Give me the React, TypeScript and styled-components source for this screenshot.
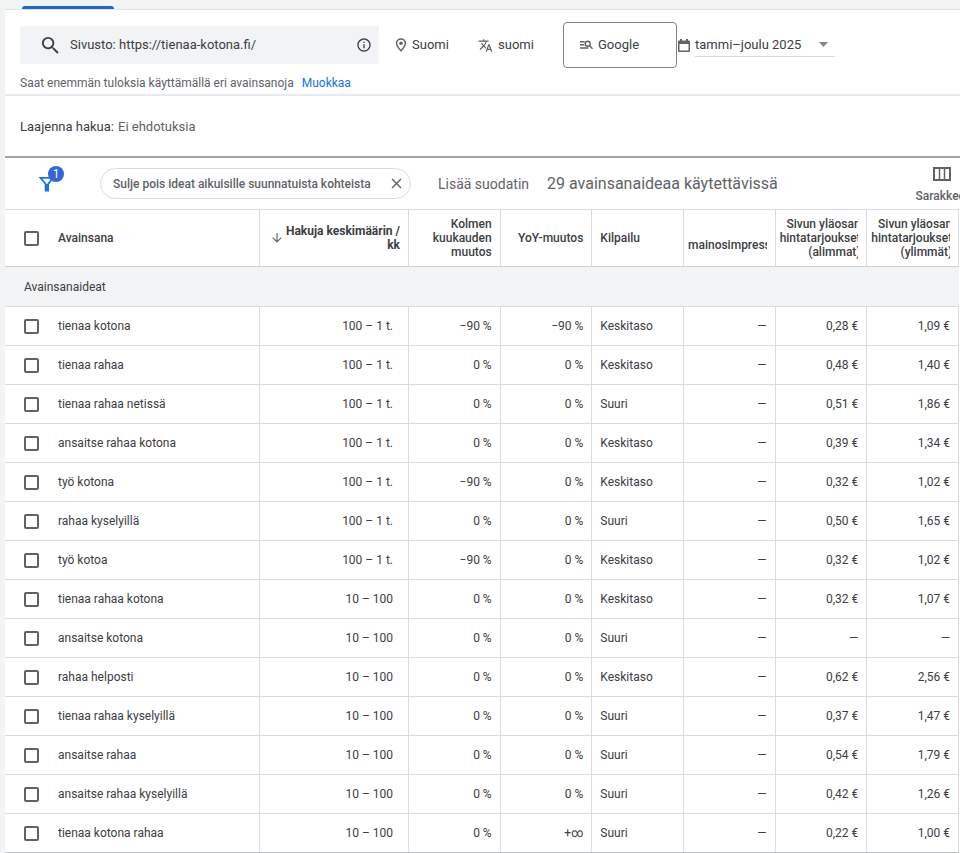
import React from "react";
import styled, { createGlobalStyle, css } from "styled-components";
import {
  MdSearch,
  MdInfoOutline,
  MdTranslate,
  MdArrowDownward,
  MdClose,
} from "react-icons/md";

const GlobalStyle = createGlobalStyle`
  * { box-sizing: border-box; }
  body {
    margin: 0;
    background: #f1f3f4;
    color: #3c4043;
    font-family: Roboto, "Liberation Sans", sans-serif;
    font-size: 12px;
    line-height: 14px;
    overflow-x: hidden;
  }
  button, input, select { font: inherit; color: inherit; }
`;

const Page = styled.div`
  padding-left: 5px;
  overflow: hidden;
`;

const TabStrip = styled.nav`
  height: 10px;
  display: flex;
  align-items: flex-end;
  padding-left: 17px;
  border-bottom: 1px solid #e0e2e4;
`;

const ActiveTab = styled.div`
  width: 92px;
  height: 3px;
  border-radius: 3px 3px 0 0;
  background: #1a67d2;
`;

const SearchPanel = styled.section`
  background: #fff;
  padding: 12px 15px 0;
  height: 86px;
  border-bottom: 2px solid #e8eaed;
`;

const SearchRow = styled.div`
  display: flex;
  align-items: center;
  height: 46px;
`;

const SearchBox = styled.label`
  display: flex;
  align-items: center;
  flex: 0 0 359px;
  height: 38px;
  padding: 0 7px 0 19px;
  background: #f1f3f4;
  svg { flex: none; }
`;

const SearchInput = styled.input`
  flex: 1;
  min-width: 0;
  margin-left: 8px;
  padding: 0;
  border: 0;
  outline: 0;
  background: transparent;
  font-size: 13px;
`;

const ToolButton = styled.button<{ $width: number; $outlined?: boolean }>`
  display: flex;
  align-items: center;
  gap: 5px;
  width: ${(p) => p.$width}px;
  height: 46px;
  padding: 0 0 0 16px;
  border: 0;
  background: #fff;
  font-size: 13px;
  text-align: left;
  ${(p) =>
    p.$outlined &&
    css`
      border: 1px solid #80868b;
      border-radius: 4px;
    `}
`;

const DateField = styled.div`
  display: flex;
  align-items: center;
  gap: 5px;
  padding-left: 1px;
`;

const DateButton = styled.button`
  display: flex;
  align-items: center;
  justify-content: space-between;
  width: 140px;
  height: 24px;
  padding: 0 7px 0 0;
  border: 0;
  border-bottom: 1px solid #dadce0;
  background: #fff;
  font-size: 13px;
`;

const Hint = styled.p`
  margin: 8px 0 0;
  color: #5f6368;
  display: flex;
  gap: 8px;
`;

const Link = styled.a`
  color: #1a73e8;
  text-decoration: none;
`;

const ExpandRow = styled.section`
  display: flex;
  align-items: center;
  gap: 4px;
  height: 62px;
  padding: 2px 15px 0;
  background: #fff;
  font-size: 13px;
  border-bottom: 2px solid #a3a5a8;
`;

const Muted = styled.span`
  color: #5f6368;
`;

const FilterBar = styled.section`
  display: flex;
  align-items: center;
  height: 51px;
  padding-left: 34px;
  background: #fff;
  color: #5f6368;
  white-space: nowrap;
`;

const FilterButton = styled.button`
  position: relative;
  flex: none;
  width: 26px;
  height: 32px;
  padding: 0;
  border: 0;
  background: transparent;
  svg { display: block; }
`;

const Badge = styled.span`
  position: absolute;
  top: -2px;
  right: 1px;
  width: 16px;
  height: 16px;
  border-radius: 50%;
  background: #3367d6;
  color: #fff;
  font-size: 12px;
  line-height: 16px;
  text-align: center;
`;

const Chip = styled.div`
  display: flex;
  align-items: center;
  justify-content: space-between;
  flex: 0 0 311px;
  height: 31px;
  margin-left: 35px;
  padding: 0 5px 0 12px;
  border: 1px solid #dadce0;
  border-radius: 16px;
  font-weight: 500;
`;

const IconButton = styled.button`
  display: flex;
  padding: 0;
  border: 0;
  background: transparent;
`;

const AddFilter = styled.button`
  margin-left: 27px;
  padding: 0;
  border: 0;
  background: transparent;
  font-size: 14px;
`;

const Count = styled.h2`
  margin: 0 0 0 18px;
  font-size: 16px;
  font-weight: 400;
`;

const ColumnsButton = styled.button`
  display: flex;
  flex-direction: column;
  align-items: center;
  gap: 8px;
  flex: none;
  margin: 0 -9px 0 auto;
  padding: 3px 0 0;
  border: 0;
  background: transparent;
  font-weight: 500;
`;

const TableArea = styled.div`
  padding-right: 1px;
  background: #fff;
`;

const Table = styled.table`
  width: 100%;
  table-layout: fixed;
  border-collapse: separate;
  border-spacing: 0;
  border-bottom: 1px solid #bdc1c6;
`;

const Col = styled.col<{ $width?: number }>`
  width: ${(p) => (p.$width ? `${p.$width}px` : "auto")};
`;

type CellProps = { $align?: "left" | "right"; $pad?: number };

const HeadCell = styled.th<CellProps>`
  height: 58px;
  padding: 0 8px 0 ${(p) => p.$pad ?? 8}px;
  border: solid #dadce0;
  border-width: 1px 1px 1px 0;
  border-bottom-color: #cfd2d5;
  font-weight: 500;
  text-align: ${(p) => p.$align ?? "right"};
`;

const HeadClip = styled.div`
  overflow: hidden;
  white-space: nowrap;
`;

const HeadLines = styled.div`
  float: left;
  text-align: right;
`;

const SortLabel = styled.div`
  display: flex;
  align-items: center;
  justify-content: flex-end;
  gap: 2px;
  font-weight: 700;
  white-space: nowrap;
  svg { flex: none; }
`;

const GroupCell = styled.th`
  height: 40px;
  padding: 0 19px;
  background: #f1f3f4;
  border-bottom: 1px solid #dadce0;
  font-weight: 400;
  text-align: left;
`;

const Cell = styled.td<CellProps>`
  height: 39px;
  padding: 0 ${(p) => p.$pad ?? 8}px 0 8px;
  border: solid #dadce0;
  border-width: 0 1px 1px 0;
  text-align: ${(p) => p.$align ?? "right"};
  white-space: nowrap;
  tr:last-child > & {
    height: 38px;
    border-bottom: 0;
  }
`;

const CheckLabel = styled.label`
  display: flex;
  align-items: center;
  gap: 19px;
  padding-left: 11px;
`;

const Checkbox = styled.input`
  appearance: none;
  flex: none;
  width: 15px;
  height: 15px;
  margin: 0;
  border: 2px solid #5f6368;
  border-radius: 2px;
  background: #fff;
  &:checked { background: #1a73e8; border-color: #1a73e8; }
`;

const rows: string[][] = [
  ["tienaa kotona", "100 – 1 t.", "−90 %", "−90 %", "Keskitaso", "—", "0,28 €", "1,09 €"],
  ["tienaa rahaa", "100 – 1 t.", "0 %", "0 %", "Keskitaso", "—", "0,48 €", "1,40 €"],
  ["tienaa rahaa netissä", "100 – 1 t.", "0 %", "0 %", "Suuri", "—", "0,51 €", "1,86 €"],
  ["ansaitse rahaa kotona", "100 – 1 t.", "0 %", "0 %", "Keskitaso", "—", "0,39 €", "1,34 €"],
  ["työ kotona", "100 – 1 t.", "−90 %", "0 %", "Keskitaso", "—", "0,32 €", "1,02 €"],
  ["rahaa kyselyillä", "100 – 1 t.", "0 %", "0 %", "Suuri", "—", "0,50 €", "1,65 €"],
  ["työ kotoa", "100 – 1 t.", "−90 %", "0 %", "Keskitaso", "—", "0,32 €", "1,02 €"],
  ["tienaa rahaa kotona", "10 – 100", "0 %", "0 %", "Keskitaso", "—", "0,32 €", "1,07 €"],
  ["ansaitse kotona", "10 – 100", "0 %", "0 %", "Suuri", "—", "—", "—"],
  ["rahaa helposti", "10 – 100", "0 %", "0 %", "Keskitaso", "—", "0,62 €", "2,56 €"],
  ["tienaa rahaa kyselyillä", "10 – 100", "0 %", "0 %", "Suuri", "—", "0,37 €", "1,47 €"],
  ["ansaitse rahaa", "10 – 100", "0 %", "0 %", "Suuri", "—", "0,54 €", "1,79 €"],
  ["ansaitse rahaa kyselyillä", "10 – 100", "0 %", "0 %", "Suuri", "—", "0,42 €", "1,26 €"],
  ["tienaa kotona rahaa", "10 – 100", "0 %", "+∞", "Suuri", "—", "0,22 €", "1,00 €"],
];

const PinIcon = () => (
  <svg width="12" height="14" viewBox="0 0 12 14" fill="none" stroke="#5f6368">
    <path d="M6 1C3.400 1 1.600 2.900 1.600 5.300 1.600 8.200 6 12.800 6 12.800S10.400 8.200 10.400 5.300C10.400 2.900 8.600 1 6 1Z" strokeWidth="1.500" />
    <circle cx="6" cy="5.300" r="1.700" fill="#5f6368" stroke="none" />
  </svg>
);

const NetworkIcon = () => (
  <svg width="13" height="10" viewBox="0 0 14 10" fill="none" stroke="#5f6368" strokeWidth="1.500">
    <path d="M0 1.500H5M0 4.800H4.500M0 8.200H9" />
    <circle cx="8.300" cy="3.700" r="2.700" />
    <path d="M10.200 5.600L13.500 9" />
  </svg>
);

const CalendarIcon = () => (
  <svg width="12" height="13" viewBox="0 0 12 13">
    <path d="M2 0H4V1.500H8V0H10V1.500H11Q12 1.500 12 2.500V12Q12 13 11 13H1Q0 13 0 12V2.500Q0 1.500 1 1.500H2ZM1.500 5V11.500H10.500V5Z" fill="#5f6368" fillRule="evenodd" />
  </svg>
);

const FilterIcon = () => (
  <svg width="16" height="32" viewBox="0 0 16 32" fill="none" stroke="#1a73e8">
    <path d="M1.500 9.800H14L9.200 16V22.500H6.600V16Z" strokeWidth="1.800" />
    <path d="M8 16V23" strokeWidth="3" />
  </svg>
);

const ColumnsIcon = () => (
  <svg width="18" height="14" viewBox="0 0 18 14" fill="none" stroke="#5f6368">
    <rect x="1" y="1" width="16" height="12" strokeWidth="2" />
    <path d="M6.500 1V13M11.500 1V13" strokeWidth="1.500" />
  </svg>
);

export default function App() {
  return (
    <Page>
      <GlobalStyle />
      <TabStrip>
        <ActiveTab />
      </TabStrip>
      <SearchPanel>
        <SearchRow>
          <SearchBox>
            <MdSearch size={23} />
            <SearchInput aria-label="Haku" defaultValue="Sivusto: https://tienaa-kotona.fi/" />
            <MdInfoOutline size={16} />
          </SearchBox>
          <ToolButton $width={83}>
            <PinIcon />
            Suomi
          </ToolButton>
          <ToolButton $width={101}>
            <MdTranslate size={15} color="#5f6368" />
            suomi
          </ToolButton>
          <ToolButton $width={114} $outlined>
            <NetworkIcon />
            Google
          </ToolButton>
          <DateField>
            <CalendarIcon />
            <DateButton>
              tammi–joulu 2025
              <svg width="9" height="5" viewBox="0 0 9 5">
                <path d="M0 0H9L4.500 5Z" fill="#80868b" />
              </svg>
            </DateButton>
          </DateField>
        </SearchRow>
        <Hint>
          Saat enemmän tuloksia käyttämällä eri avainsanoja
          <Link href="#muokkaa">Muokkaa</Link>
        </Hint>
      </SearchPanel>
      <ExpandRow>
        <span>Laajenna hakua:</span>
        <Muted>Ei ehdotuksia</Muted>
      </ExpandRow>
      <FilterBar>
        <FilterButton aria-label="Suodattimet">
          <FilterIcon />
          <Badge>1</Badge>
        </FilterButton>
        <Chip>
          Sulje pois ideat aikuisille suunnatuista kohteista
          <IconButton aria-label="Poista suodatin">
            <MdClose size={17} />
          </IconButton>
        </Chip>
        <AddFilter>Lisää suodatin</AddFilter>
        <Count>29 avainsanaideaa käytettävissä</Count>
        <ColumnsButton>
          <ColumnsIcon />
          Sarakkeet
        </ColumnsButton>
      </FilterBar>
      <TableArea>
        <Table>
          <colgroup>
            <Col $width={255} />
            <Col $width={149} />
            <Col /><Col /><Col /><Col /><Col /><Col />
          </colgroup>
          <thead>
            <tr>
              <HeadCell $align="left">
                <CheckLabel>
                  <Checkbox type="checkbox" />
                  Avainsana
                </CheckLabel>
              </HeadCell>
              <HeadCell>
                <SortLabel>
                  <MdArrowDownward size={14} color="#5f6368" />
                  <span>Hakuja keskimäärin /<br />kk</span>
                </SortLabel>
              </HeadCell>
              <HeadCell>Kolmen kuukauden muutos</HeadCell>
              <HeadCell>YoY-muutos</HeadCell>
              <HeadCell $align="left">Kilpailu</HeadCell>
              <HeadCell $pad={4}>
                <HeadClip>
                  <HeadLines><br />mainosimpressio</HeadLines>
                </HeadClip>
              </HeadCell>
              <HeadCell $pad={4}>
                <HeadClip>
                  <HeadLines>Sivun yläosan<br />hintatarjoukset<br />(alimmat)</HeadLines>
                </HeadClip>
              </HeadCell>
              <HeadCell $pad={4}>
                <HeadClip>
                  <HeadLines>Sivun yläosan<br />hintatarjoukset<br />(ylimmät)</HeadLines>
                </HeadClip>
              </HeadCell>
            </tr>
          </thead>
          <tbody>
            <tr>
              <GroupCell colSpan={8}>Avainsanaideat</GroupCell>
            </tr>
            {rows.map(([keyword, volume, threeMonth, yoy, competition, share, low, high]) => (
              <tr key={keyword}>
                <Cell $align="left">
                  <CheckLabel>
                    <Checkbox type="checkbox" />
                    {keyword}
                  </CheckLabel>
                </Cell>
                <Cell $pad={15}>{volume}</Cell>
                <Cell>{threeMonth}</Cell>
                <Cell>{yoy}</Cell>
                <Cell $align="left">{competition}</Cell>
                <Cell>{share}</Cell>
                <Cell>{low}</Cell>
                <Cell>{high}</Cell>
              </tr>
            ))}
          </tbody>
        </Table>
      </TableArea>
    </Page>
  );
}
